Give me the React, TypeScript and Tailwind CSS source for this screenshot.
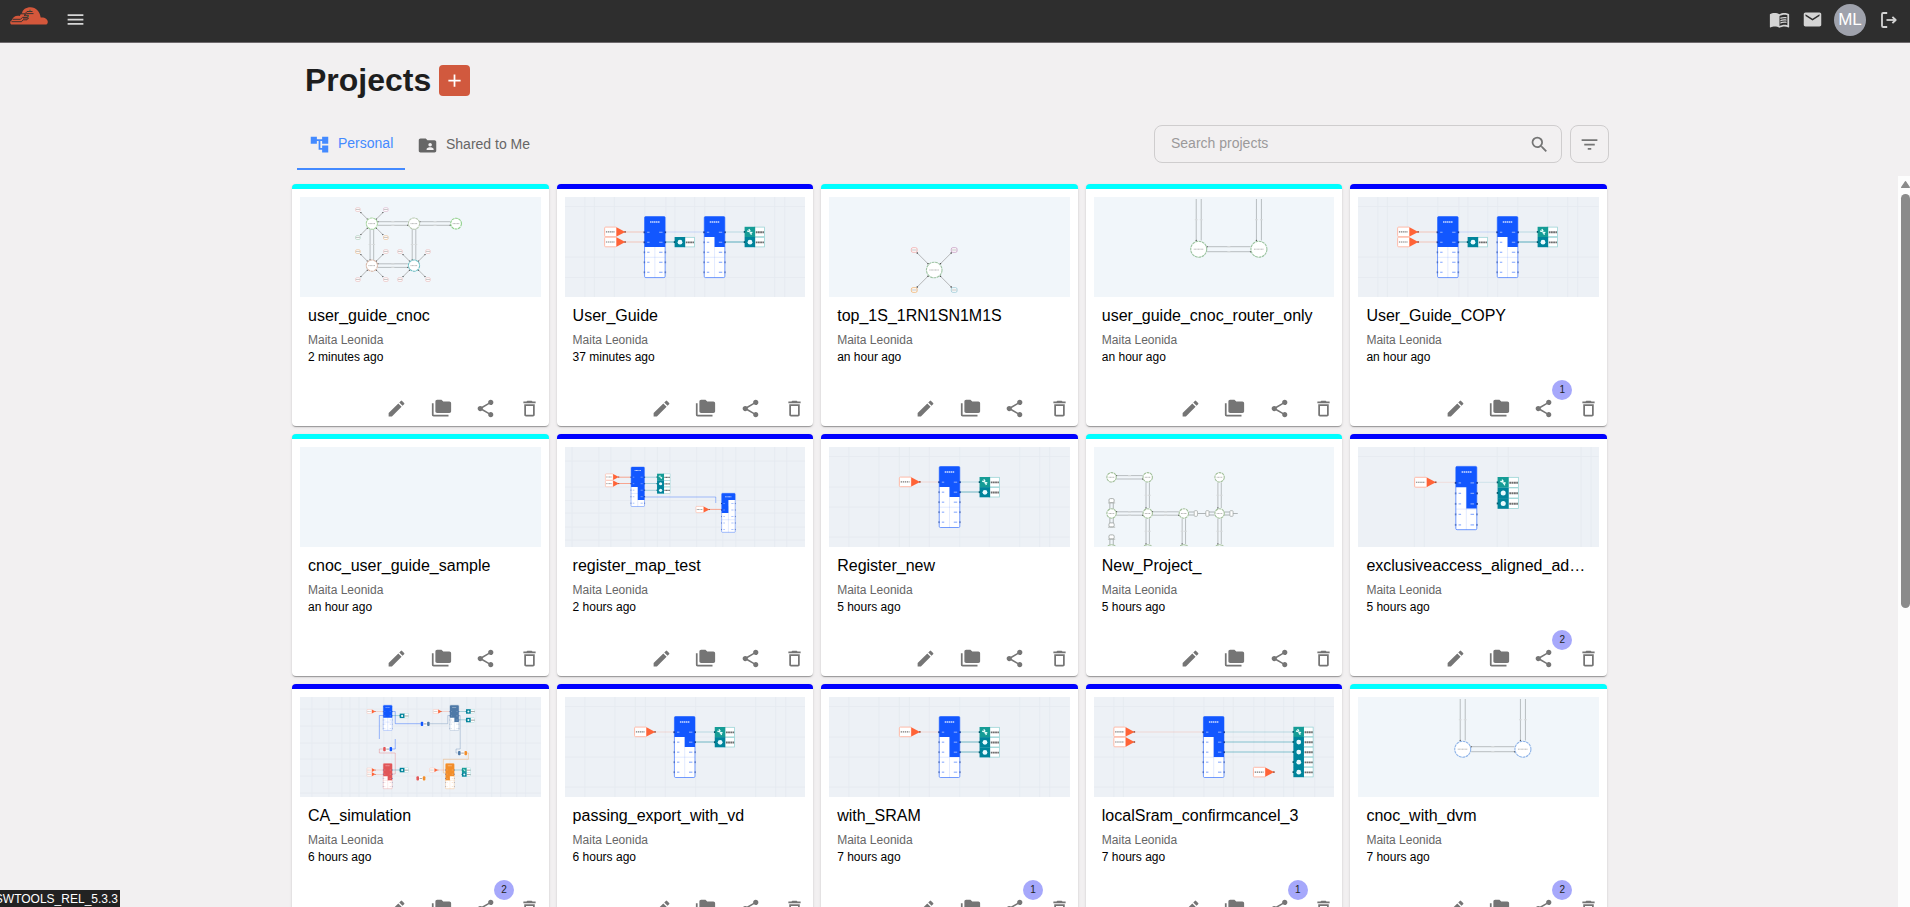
import type { ReactNode } from "react";
import {
  MdAccountTree,
  MdAdd,
  MdDeleteOutline,
  MdEdit,
  MdEmail,
  MdFilterList,
  MdFolderCopy,
  MdFolderShared,
  MdMenu,
  MdMenuBook,
  MdSearch,
  MdShare,
} from "react-icons/md";

const BLUE = "#1257ff";
const ORANGE = "#ff6337";
const TEAL = "#00849b";
const GREEN = "#159c96";

/* ---------- block diagram previews ---------- */

function Initiator({ x, y, k = 1 }: { x: number; y: number; k?: number }) {
  return (
    <g transform={`translate(${x} ${y}) scale(${k})`}>
      <rect x="0.3" y="0.3" width="12" height="9.6" rx="1" fill="#fff" stroke="#ffb39f" strokeWidth="0.9" />
      <path d="M1.6 5.1H10.5" stroke="#444" strokeWidth="1.2" strokeDasharray="1.4 0.7" opacity="0.7" />
      <path d="M12.2 0.4L21 5.1L12.2 9.8Z" fill={ORANGE} />
      <rect x="20" y="4.3" width="1.6" height="1.6" fill="#a4503a" />
    </g>
  );
}

function Target({ x, y, k = 1, first = false }: { x: number; y: number; k?: number; first?: boolean }) {
  return (
    <g transform={`translate(${x} ${y}) scale(${k})`}>
      <rect x="10" y="0.3" width="9.8" height="9.6" fill="#fff" stroke="#8fd0d1" strokeWidth="0.7" />
      <rect x="0" y="0" width="10.6" height="10.2" fill={first ? GREEN : TEAL} />
      {first ? (
        <path d="M4.2 2.4L5.6 4.4M2.6 4.2L5.2 4.8M5 6L7.8 5.6M5.8 5L6.8 8" stroke="#e9fffb" strokeWidth="1.3" />
      ) : (
        <circle cx="5.4" cy="5.2" r="2.4" fill="#e8fbff" />
      )}
      <path d="M11.2 5.4H19.4" stroke="#222" strokeWidth="1.9" strokeDasharray="1.8 0.4" opacity="0.65" />
      <rect x="-0.8" y="4.2" width="1.4" height="1.8" fill="#045a6c" />
    </g>
  );
}

interface BlockProps {
  x: number;
  y: number;
  w?: number;
  h?: number;
  left: number;
  right: number;
  color?: string;
  step?: number;
}

function Block({ x, y, w = 20.6, h = 61, left, right, color = BLUE, step = 10 }: BlockProps) {
  const k = step / 10;
  const rows = [0, 1, 2, 3, 4].map((i) => y + (15.7 + i * 10) * k);
  const mid = x + w / 2;
  return (
    <g>
      <rect x={x} y={y} width={w} height={h} rx={1.2 * k} fill="#fff" stroke={color} strokeOpacity="0.65" strokeWidth={0.9 * k} />
      <path d={`M${mid} ${y + 20 * k}V${y + h}M${x} ${y + 40.7 * k}H${x + w}`} stroke={color} strokeOpacity="0.2" strokeWidth="0.6" />
      <path d={`M${x} ${y + 1}q0 -1 1 -1H${x + w - 1}q1 0 1 1V${right}H${mid}V${left}H${x}Z`} fill={color} />
      <path d={`M${x + 5.5 * k} ${y + 5.4 * k}h${9.6 * k}`} stroke="#fff" strokeWidth={1.5 * k} strokeDasharray={`${1.5 * k} ${0.5 * k}`} opacity="0.8" />
      {rows.map((r, i) => (
        <g key={i}>
          <path
            d={`M${x + 2.6 * k} ${r}h${2.4 * k}`}
            stroke={r < left ? "#fff" : color}
            strokeWidth={1.2 * k}
            opacity="0.45"
          />
          <path
            d={`M${x + w - 6 * k} ${r}h${3.4 * k}`}
            stroke={r < right ? "#fff" : color}
            strokeWidth={1.2 * k}
            opacity="0.45"
          />
          <rect x={x - 1 * k} y={r - 0.9 * k} width={1.6 * k} height={1.8 * k} fill="#1b3f9e" opacity={r < left ? 1 : 0.5} />
          <rect x={x + w - 0.6 * k} y={r - 0.9 * k} width={1.6 * k} height={1.8 * k} fill="#1b3f9e" opacity={r < right ? 1 : 0.5} />
        </g>
      ))}
    </g>
  );
}

function Bridge({ x, y, a, b }: { x: number; y: number; a: string; b: string }) {
  return (
    <g>
      <rect x={x} y={y} width="9" height="4.2" fill="#fff" opacity="0.8" />
      <rect x={x} y={y} width="2.6" height="4.2" rx="0.9" fill={a} />
      <rect x={x + 6.4} y={y} width="2.6" height="4.2" rx="0.9" fill={b} />
      <path d={`M${x + 3.2} ${y + 2.1}h2.6`} stroke="#555" strokeWidth="0.8" opacity="0.7" />
    </g>
  );
}

function Wire({ d, c, o = 0.35 }: { d: string; c: string; o?: number }) {
  return <path d={d} fill="none" stroke={c} strokeWidth="0.9" opacity={o} />;
}

function BlockCanvas({ v, h, children }: { v: number[]; h: number[]; children: ReactNode }) {
  return (
    <svg viewBox="0 0 241 100" preserveAspectRatio="none" className="block h-[100px] w-full bg-[#edf1f6]">
      <g stroke="#e5eaf0" strokeWidth="0.8">
        {v.map((x) => (
          <path key={`v${x}`} d={`M${x} 0V100`} />
        ))}
        {h.map((y) => (
          <path key={`h${y}`} d={`M0 ${y}H241`} />
        ))}
      </g>
      {children}
    </svg>
  );
}

function UserGuidePreview() {
  return (
    <BlockCanvas v={[20, 29.5, 49.5, 80, 101, 110, 130, 140, 160, 190, 210, 220]} h={[9.5, 60, 80.5]}>
      <Wire d="M60 35H80M60 45H80" c={ORANGE} />
      <Wire d="M100 35H140" c={BLUE} o={0.2} />
      <Wire d="M100 45H110M160 45H180" c={TEAL} o={0.7} />
      <Wire d="M160 35H180" c={TEAL} o={0.25} />
      <Initiator x={39.4} y={29.8} />
      <Initiator x={39.4} y={39.9} />
      <Block x={79.7} y={19.6} left={50} right={50} />
      <Block x={139.5} y={19.6} left={40} right={50} />
      <Target x={109.8} y={40} />
      <Target x={179.9} y={29.8} first />
      <Target x={179.9} y={40} />
    </BlockCanvas>
  );
}

function RegisterMapPreview() {
  return (
    <BlockCanvas v={[7, 34, 46, 66, 80, 92.5, 105, 132, 151, 158, 171, 190, 210, 222]} h={[14, 40, 53.5, 66, 80, 93]}>
      <Wire d="M53 30.2H66M53 36.5H66M144 62.4H157" c={ORANGE} o={0.6} />
      <Wire d="M80 30.2H92M80 36.5H92M80 43.3H92" c={TEAL} />
      <Wire d="M80 50H151V56" c={BLUE} o={0.4} />
      <Initiator x={40.3} y={26.7} k={0.65} />
      <Initiator x={40.3} y={33.3} k={0.65} />
      <Initiator x={131} y={59.2} k={0.65} />
      <Block x={66.2} y={20} w={13.4} h={39.5} left={40} right={53} step={6.5} />
      <Block x={156.9} y={46.3} w={13.6} h={39} left={66} right={53} step={6.5} />
      <Target x={92.2} y={26.7} k={0.66} first />
      <Target x={92.2} y={33.3} k={0.66} />
      <Target x={92.2} y={39.9} k={0.66} />
    </BlockCanvas>
  );
}

function SinglePreview({ dx = 0, targets }: { dx?: number; targets: number }) {
  return (
    <BlockCanvas v={[20, 50, 70.5, 80.5, 100.5, 131, 160.5, 191, 211, 221]} h={[9.5, 40, 60, 90]}>
      <g transform={`translate(${dx} 0)`}>
        <Wire d="M91 35H110" c={ORANGE} o={0.2} />
        <Wire d="M131 35H151" c={TEAL} o={0.25} />
        <Wire d={targets > 2 ? "M131 45H151M131 55H151" : "M131 45H151"} c={TEAL} o={0.6} />
        <Initiator x={70.2} y={29.8} />
        <Block x={110.4} y={19.5} left={40} right={targets > 2 ? 60 : 50} />
        {Array.from({ length: targets }, (_, i) => (
          <Target key={i} x={150.8} y={30 + i * 10.1} first={i === 0} />
        ))}
      </g>
    </BlockCanvas>
  );
}

function ExclusivePreview() {
  return (
    <BlockCanvas v={[56.5, 66.5, 139.5, 150.5, 223.5, 233.5]} h={[9.5]}>
      <Wire d="M78 35.3H98" c={ORANGE} o={0.15} />
      <Wire d="M119 35.3H140" c={TEAL} o={0.15} />
      <Initiator x={56.4} y={30} k={1.03} />
      <Block x={98} y={19.4} w={21} h={63.3} left={40.3} right={61.6} step={10.5} />
      <Target x={139.8} y={30} k={1.05} first />
      <Target x={139.8} y={40.6} k={1.05} />
      <Target x={139.8} y={51.1} k={1.05} />
    </BlockCanvas>
  );
}

function LocalSramPreview() {
  return (
    <BlockCanvas v={[20, 29.5, 80, 110, 130, 139.5, 160, 171, 190, 200, 221]} h={[9.5, 40, 60, 90]}>
      <Wire d="M41 35H110" c={ORANGE} o={0.2} />
      <Wire d="M131 35H200" c={TEAL} o={0.25} />
      <Wire d="M131 45H200M131 55H200" c={TEAL} o={0.5} />
      <Initiator x={19.6} y={29.8} />
      <Initiator x={19.6} y={39.9} />
      <Initiator x={159.4} y={70} />
      <Block x={109.6} y={19.5} left={40} right={60} />
      {[0, 1, 2, 3, 4].map((i) => (
        <Target key={i} x={199.7} y={29.8 + i * 10.05} first={i === 0} />
      ))}
    </BlockCanvas>
  );
}

function SimulationPreview() {
  const slate = "#4e79a7";
  const red = "#e15759";
  const amber = "#f28e2b";
  return (
    <BlockCanvas
      v={[12, 29, 42, 50, 59, 67, 84, 92, 108, 117, 133, 142, 150, 167, 176, 192, 201, 217, 226]}
      h={[12, 29, 46, 62, 79, 96]}
    >
      <Wire d="M92 14.5H95.4V26.7H121M83 18.5H79.5V42M95.4 42V52H92" c={BLUE} o={0.45} />
      <Wire d="M130 26.7H148V18.5H150M159 18.5H160.5V52H156.3V56H158" c={slate} />
      <Wire d="M83 52H79.5V56H95.4V77H92" c={red} />
      <Wire d="M167 56H168.7V62.3H143.6V76H146" c={amber} />
      <Wire d="M75 14.5H83M142 14.5H150M75 73H83M75 77.5H83M138 73H146" c={ORANGE} o={0.25} />
      <Wire d="M92 18.6H100M159 14.5H166M159 22.8H166M92 73H100M154 73H162" c={TEAL} o={0.35} />
      <Initiator x={67} y={12.4} k={0.41} />
      <Initiator x={133.4} y={12.4} k={0.41} />
      <Initiator x={67} y={71} k={0.41} />
      <Initiator x={67} y={75.2} k={0.41} />
      <Initiator x={129.7} y={71} k={0.41} />
      <Block x={83.4} y={8.2} w={8.9} h={25.2} left={20.8} right={20.8} step={4.15} />
      <Block x={150.2} y={8.2} w={8.9} h={25.2} left={20.8} right={25} color={slate} step={4.15} />
      <Block x={83.4} y={66.5} w={8.9} h={25.2} left={79.2} right={83.3} color={red} step={4.15} />
      <Block x={145.8} y={66.5} w={8.7} h={25.2} left={83.3} right={79.2} color={amber} step={4.15} />
      <Target x={99.9} y={16.6} k={0.44} />
      <Target x={166.3} y={12.2} k={0.44} />
      <Target x={166.3} y={20.8} k={0.44} />
      <Target x={99.9} y={70.8} k={0.44} />
      <Target x={162.2} y={70.8} k={0.44} first />
      <Target x={162.2} y={75.2} k={0.44} />
      <Bridge x={120.9} y={24.8} a={BLUE} b={slate} />
      <Bridge x={83.3} y={50} a={red} b={BLUE} />
      <Bridge x={158.3} y={54} a={slate} b={amber} />
      <Bridge x={116.6} y={79.3} a={red} b={amber} />
    </BlockCanvas>
  );
}

/* ---------- router network previews ---------- */

function Router({ x, y, r, c = "#a9c9a4" }: { x: number; y: number; r: number; c?: string }) {
  return (
    <g>
      <circle cx={x} cy={y} r={r} fill="#fff" stroke={c} strokeWidth="1.1" strokeDasharray="2.8 0.6" />
      <path d={`M${x - r * 0.62} ${y}h${r * 1.24}`} stroke="#777" strokeWidth="0.9" strokeDasharray="1 0.4" opacity="0.6" />
    </g>
  );
}

function Leaf({ x, y, cx, cy, r, c }: { x: number; y: number; cx: number; cy: number; r: number; c: string }) {
  const sx = Math.sign(cx - x);
  const sy = Math.sign(cy - y);
  const e = r * 0.76;
  const k = r > 7 ? 1 : 0.8;
  return (
    <g>
      <path d={`M${x + sx * 2.6} ${y + sy * 2.6}L${cx - sx * e} ${cy - sy * e}`} stroke="#9a9a9a" strokeWidth="0.7" />
      <circle cx={x + sx * 3} cy={y + sy * 3} r={0.8 * k} fill="#444" />
      <circle cx={cx - sx * e} cy={cy - sy * e} r={0.8 * k} fill="#444" />
      <rect x={x - 2.9 * k} y={y - 2.3 * k} width={5.8 * k} height={4.6 * k} rx={1.5 * k} fill="#fff" stroke={c} strokeWidth={0.8 * k} />
      <path d={`M${x - 2.4 * k} ${y}h${4.8 * k}`} stroke="#666" strokeWidth="0.7" opacity="0.55" />
    </g>
  );
}

function Lane({ x1, y1, x2, y2, g = 1.8 }: { x1: number; y1: number; x2: number; y2: number; g?: number }) {
  const flat = y1 === y2;
  const mx = (x1 + x2) / 2;
  const my = (y1 + y2) / 2;
  const d = flat
    ? `M${x1} ${y1 - g}H${x2}M${x1} ${y1 + g}H${x2}`
    : `M${x1 - g} ${y1}V${y2}M${x1 + g} ${y1}V${y2}`;
  const marks = flat
    ? `M${mx - 1.5} ${my - g}h3M${mx - 1.5} ${my + g}h3`
    : `M${mx - g - 1.4} ${my}h2.8M${mx + g - 1.4} ${my}h2.8`;
  return (
    <g>
      <path d={d} stroke="#a9afb1" strokeWidth="0.8" />
      <path d={marks} stroke="#d6d9da" strokeWidth="1.2" />
      {flat ? (
        <>
          <circle cx={x1} cy={y1 - g} r="0.7" fill="#555" />
          <circle cx={x2} cy={y2 + g} r="0.7" fill="#555" />
        </>
      ) : (
        <circle cx={x2 - g} cy={y2} r="0.7" fill="#555" />
      )}
    </g>
  );
}

function NetCanvas({ children }: { children?: ReactNode }) {
  return (
    <svg viewBox="0 0 241 100" preserveAspectRatio="none" className="block h-[100px] w-full bg-[#f1f6fa]">
      {children}
    </svg>
  );
}

function Star({ cx, cy, r, dx, up, down, colors }: { cx: number; cy: number; r: number; dx: number; up: number; down: number; colors: string[] }) {
  return (
    <g>
      <Leaf x={cx - dx} y={cy - up} cx={cx} cy={cy} r={r} c={colors[0]} />
      <Leaf x={cx + dx} y={cy - up} cx={cx} cy={cy} r={r} c={colors[1]} />
      <Leaf x={cx - dx} y={cy + down} cx={cx} cy={cy} r={r} c={colors[2]} />
      <Leaf x={cx + dx} y={cy + down} cx={cx} cy={cy} r={r} c={colors[3]} />
    </g>
  );
}

function CnocPreview() {
  const pink = "#e9bcbc";
  return (
    <NetCanvas>
      <Lane x1={78} y1={26.5} x2={108} y2={26.5} />
      <Lane x1={120} y1={26.5} x2={150.5} y2={26.5} />
      <Lane x1={78} y1={68.6} x2={108} y2={68.6} />
      <Lane x1={72} y1={32} x2={72} y2={63} />
      <Lane x1={114.2} y1={32} x2={114.2} y2={63} />
      <Star cx={72} cy={26.6} r={6} dx={14} up={14} down={14} colors={[pink, "#d9b3c9", "#a9cbb8", "#e8b98b"]} />
      <Star cx={72} cy={68.6} r={6} dx={14} up={14} down={14} colors={["#e8b98b", pink, pink, pink]} />
      <Star cx={114.2} cy={68.6} r={6} dx={14} up={14} down={14} colors={[pink, pink, pink, pink]} />
      <Router x={72} y={26.6} r={5.6} c="#a8d5a0" />
      <Router x={114.2} y={26.6} r={5.6} c="#b8c9b0" />
      <Router x={156.3} y={26.6} r={5.4} c="#8fcf8a" />
      <Router x={72} y={68.6} r={5.6} c="#d8b8a8" />
      <Router x={114.2} y={68.6} r={5.6} c="#6fbfc4" />
    </NetCanvas>
  );
}

function TopPreview() {
  return (
    <NetCanvas>
      <Star cx={105.4} cy={73} r={8.2} dx={20} up={20} down={20} colors={["#f0a8a8", "#c79ac0", "#efb06c", "#9ac8d4"]} />
      <Router x={105.4} y={73} r={7.8} c="#9fc4a4" />
    </NetCanvas>
  );
}

function RouterPairPreview({ c }: { c: string }) {
  return (
    <NetCanvas>
      <Lane x1={104.9} y1={2} x2={104.9} y2={43.5} g={2.5} />
      <Lane x1={165.2} y1={2} x2={165.2} y2={43.5} g={2.5} />
      <Lane x1={113.3} y1={52.2} x2={156.8} y2={52.2} g={2.5} />
      <Router x={104.9} y={52.2} r={8} c={c} />
      <Router x={165.2} y={52.2} r={8} c={c} />
    </NetCanvas>
  );
}

function NewProjectPreview() {
  const c = "#a3c09b";
  const stubs: [number, number][] = [
    [17.6, 54],
    [17.6, 78.3],
    [17.6, 90.3],
    [102, 66.5],
    [113.6, 66.5],
    [137.7, 66.5],
  ];
  return (
    <NetCanvas>
      <Lane x1={22.5} y1={30.3} x2={48.8} y2={30.3} g={1.7} />
      <Lane x1={22.5} y1={66.5} x2={48.8} y2={66.5} g={1.7} />
      <Lane x1={58.5} y1={66.5} x2={85} y2={66.5} g={1.7} />
      <Lane x1={53.8} y1={35.5} x2={53.8} y2={61} g={1.7} />
      <Lane x1={125.8} y1={35.5} x2={125.8} y2={61} g={1.7} />
      <Lane x1={53.8} y1={71.5} x2={53.8} y2={97} g={1.7} />
      <Lane x1={90} y1={71.5} x2={90} y2={97} g={1.7} />
      <Lane x1={125.8} y1={71.5} x2={125.8} y2={97} g={1.7} />
      <path
        d="M15.9 56V62M19.3 56V62M15.9 71V76M19.3 71V76M15.9 92V98M19.3 92V98M95 65H100M95 68H100M104 66.5H112M115 65H121M115 68H121M130 65H136M130 68H136M139 66.5H144"
        stroke="#9da3a4"
        strokeWidth="0.8"
      />
      {stubs.map(([x, y]) =>
        x < 20 ? (
          <g key={`${x}-${y}`}>
            <rect x={x - 2.6} y={y - 2.4} width="5.2" height="4" rx="1.4" fill="#fff" stroke="#8d928f" strokeWidth="0.7" />
            <path d={`M${x - 3.6} ${y + 1.9}h7.2`} stroke="#a9aeab" strokeWidth="0.8" />
          </g>
        ) : (
          <rect key={`${x}-${y}`} x={x - 1.6} y={y - 2.8} width="3.2" height="5.6" rx="0.8" fill="#fff" stroke="#9a9f9c" strokeWidth="0.7" />
        ),
      )}
      {[17.6, 53.8, 125.8].map((x) => (
        <Router key={x} x={x} y={30.3} r={4.7} c={c} />
      ))}
      {[17.6, 53.8, 90, 125.8].map((x) => (
        <g key={x}>
          <Router x={x} y={66.5} r={4.7} c={c} />
          <path d={`M${x - 3.8} 98.600Q${x} 96.800 ${x + 3.8} 98.600`} fill="#fff" stroke={c} strokeWidth="1" />
        </g>
      ))}
    </NetCanvas>
  );
}

/* ---------- page ---------- */

interface Project {
  name: string;
  time: string;
  kind: "cyan" | "blue";
  preview: ReactNode;
  shared?: number;
}

const projects: Project[] = [
  { name: "user_guide_cnoc", time: "2 minutes ago", kind: "cyan", preview: <CnocPreview /> },
  { name: "User_Guide", time: "37 minutes ago", kind: "blue", preview: <UserGuidePreview /> },
  { name: "top_1S_1RN1SN1M1S", time: "an hour ago", kind: "cyan", preview: <TopPreview /> },
  { name: "user_guide_cnoc_router_only", time: "an hour ago", kind: "cyan", preview: <RouterPairPreview c="#9cc4a0" /> },
  { name: "User_Guide_COPY", time: "an hour ago", kind: "blue", preview: <UserGuidePreview />, shared: 1 },
  { name: "cnoc_user_guide_sample", time: "an hour ago", kind: "cyan", preview: <NetCanvas /> },
  { name: "register_map_test", time: "2 hours ago", kind: "blue", preview: <RegisterMapPreview /> },
  { name: "Register_new", time: "5 hours ago", kind: "blue", preview: <SinglePreview targets={2} /> },
  { name: "New_Project_", time: "5 hours ago", kind: "cyan", preview: <NewProjectPreview /> },
  { name: "exclusiveaccess_aligned_address", time: "5 hours ago", kind: "blue", preview: <ExclusivePreview />, shared: 2 },
  { name: "CA_simulation", time: "6 hours ago", kind: "blue", preview: <SimulationPreview />, shared: 2 },
  { name: "passing_export_with_vd", time: "6 hours ago", kind: "blue", preview: <SinglePreview dx={-0.8} targets={2} /> },
  { name: "with_SRAM", time: "7 hours ago", kind: "blue", preview: <SinglePreview targets={3} />, shared: 1 },
  { name: "localSram_confirmcancel_3", time: "7 hours ago", kind: "blue", preview: <LocalSramPreview />, shared: 1 },
  { name: "cnoc_with_dvm", time: "7 hours ago", kind: "cyan", preview: <RouterPairPreview c="#8fb4e8" />, shared: 2 },
];

function ProjectCard({ project }: { project: Project }) {
  const bar = project.kind === "cyan" ? "border-[#00ffff]" : "border-[#0000ff]";
  return (
    <article
      className={`flex h-[242px] min-w-0 flex-col overflow-hidden rounded border-t-[5px] bg-white px-2 pt-2 shadow-[0_2px_1px_-1px_rgba(0,0,0,0.2),0_1px_1px_0_rgba(0,0,0,0.14),0_1px_3px_0_rgba(0,0,0,0.12)] ${bar}`}
    >
      {project.preview}
      <div className="px-2 pt-[7px]">
        <h2 className="truncate text-base leading-6 text-black">{project.name}</h2>
        <p className="mt-1 text-xs leading-[17px] text-[#666]">Maita Leonida</p>
        <p className="text-xs leading-[17px] text-black">{project.time}</p>
      </div>
      <div className="mt-auto mr-[0.3px] mb-[7.5px] flex justify-end gap-[23.4px] text-[21px] text-[#757575]">
        <MdEdit />
        <MdFolderCopy />
        <span className="relative">
          <MdShare />
          {project.shared !== undefined && (
            <span className="absolute -top-[18px] left-[19px] flex size-5 items-center justify-center rounded-full bg-[#a6a8fb] text-[10px] leading-none text-[#222]">
              {project.shared}
            </span>
          )}
        </span>
        <MdDeleteOutline />
      </div>
    </article>
  );
}

function Logo() {
  return (
    <svg viewBox="0 0 38 18" className="block h-[18px] w-[38px]">
      <path
        d="M2 17.6C-.4 17.2-.4 13.6 2.2 12.9C2.6 9.8 6 8 9.800 8.900C10.500 7.500 11 6.800 12 6.200C12.600 2.500 16 .2 20.500 .2C26 .2 30 4.600 30.700 10.500C34.500 10 37.800 12 37.800 15C37.800 16.600 36.800 17.600 35.300 17.600Z"
        fill="#d4573b"
      />
      <g fill="none" stroke="#2e2e2e" strokeWidth="0.9">
        <path d="M1.5 14.7H11.5L13 12.8H17L18.5 11H13" />
        <path d="M3 12.3H10.5L12.5 10.3H17.5L18.5 8.3H14" />
        <path d="M11 6.8H15L17 4.5H22.5" />
        <path d="M14 8.3L16.5 6.6H23.500" />
      </g>
      <g fill="#4d6a45">
        <circle cx="20" cy="3.4" r="0.8" />
        <circle cx="18.3" cy="9.4" r="0.8" />
      </g>
    </svg>
  );
}

function SignOutIcon() {
  return (
    <svg viewBox="0 0 16 16" className="h-4 w-4" fill="none" stroke="currentColor" strokeWidth="1.8" strokeLinejoin="round">
      <path d="M6.200 1H2.300Q1 1 1 2.300V13.700Q1 15 2.300 15H6.200" />
      <path d="M5.500 8H14" />
      <path d="M11.400 4.800L14.700 8L11.400 11.200" />
    </svg>
  );
}

export default function App() {
  return (
    <div className="relative flex h-[907px] w-full flex-col overflow-hidden bg-[#f2f0f1] font-['Liberation_Sans',Arial,sans-serif]">
      <header className="flex h-[43px] shrink-0 items-start justify-between border-b border-[#6e6a6d] bg-[#2e2e2e] pr-[13px] pl-[10px]">
        <div className="flex pt-[7px]">
          <Logo />
          <MdMenu className="mt-[2px] ml-[17px] text-[21px] text-[#d6d6d6]" />
        </div>
        <div className="flex h-10 items-center text-[21px] text-[#d4d4d4]">
          <MdMenuBook className="mb-px" />
          <MdEmail className="mb-px ml-3" />
          <span className="ml-[11px] flex size-8 items-center justify-center rounded-full bg-[#9fa2ac] text-[17px] text-white">
            <span className="-mt-px">ML</span>
          </span>
          <span className="mb-px ml-[15px]">
            <SignOutIcon />
          </span>
        </div>
      </header>

      <div className="ml-[297px] w-[1312px] shrink-0">
        <div className="flex items-center gap-2 pt-[19px] pl-2">
          <h1 className="text-[32px] leading-9 font-bold text-[#1e1e1e]">Projects</h1>
          <button className="flex size-[31px] items-center justify-center rounded bg-[#d1593e] text-[21px] text-white">
            <MdAdd />
          </button>
        </div>

        <div className="mt-[27px] flex items-start justify-between">
          <nav className="flex text-sm text-[#666]">
            <div className="flex h-[45px] w-[108px] items-center gap-2 border-b-2 border-[#448aff] pb-[5px] pl-3 text-[#448aff]">
              <MdAccountTree className="text-[21px]" />
              <span className="-mt-0.5">Personal</span>
            </div>
            <div className="flex h-[45px] items-center gap-2 pb-[5px] pl-3">
              <MdFolderShared className="text-[21px]" />
              <span className="-mt-0.5">Shared to Me</span>
            </div>
          </nav>
          <div className="flex gap-2">
            <label className="flex h-[38px] w-[408px] items-center justify-between rounded-lg border border-[#cfcdce] pr-[11px] pl-4">
              <span className="-mt-0.5 text-sm text-[#9b999a]">Search projects</span>
              <MdSearch className="text-[21px] text-[#757575]" />
            </label>
            <button className="flex h-[38px] w-[39px] items-center justify-center rounded-lg border border-[#cfcdce] text-[21px] text-[#757575]">
              <MdFilterList />
            </button>
          </div>
        </div>
      </div>

      <div className="mt-[6px] flex min-h-0 flex-1 justify-between">
        <main className="ml-[292px] grid w-[1315px] grid-cols-5 content-start gap-2 pt-2">
          {projects.map((p) => (
            <ProjectCard key={p.name} project={p} />
          ))}
        </main>
        <div className="flex w-3 flex-col bg-[#fdfdfd] pt-[5px] pl-[3px]">
          <svg viewBox="0 0 9 7" className="h-[7px] w-[9px]">
            <path d="M4.500 0.600L8.400 6.400H0.600Z" fill="#8b8b8b" stroke="#8b8b8b" strokeWidth="1.100" strokeLinejoin="round" />
          </svg>
          <div className="mt-[6px] h-[414px] w-[9px] rounded-full bg-[#8b8b8b]" />
        </div>
      </div>

      <div className="absolute bottom-0 left-0 flex h-[17px] w-[120px] items-center justify-end overflow-hidden bg-[#222] pr-[2px] text-xs whitespace-nowrap text-white">
        SWTOOLS_REL_5.3.3
      </div>
    </div>
  );
}
